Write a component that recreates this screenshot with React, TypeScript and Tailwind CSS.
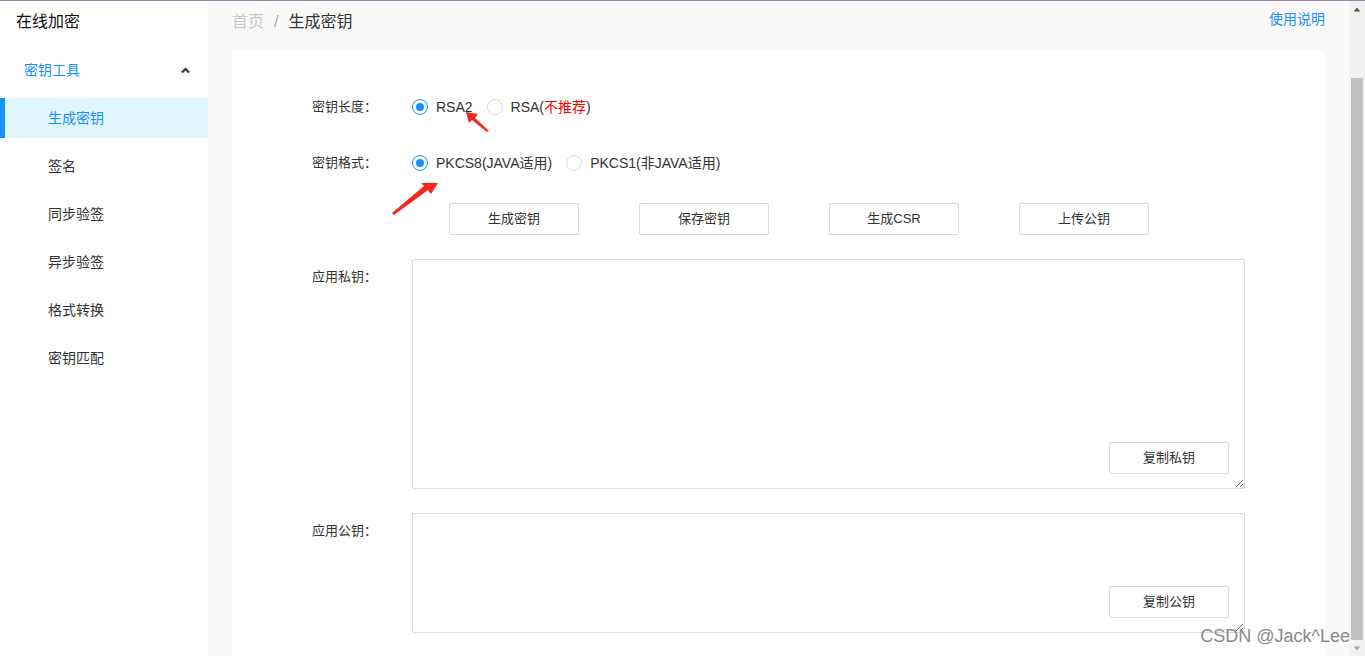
import React from "react";

// ── 定数 ────────────────────────────────────────────────────────────────────

const FONT = {
  fontFamily:
    '"Liberation Sans", "Noto Sans CJK SC", "Noto Sans", sans-serif',
};

const MENU_ITEMS = ["生成密钥", "签名", "同步验签", "异步验签", "格式转换", "密钥匹配"];

const ACTIONS = ["生成密钥", "保存密钥", "生成CSR", "上传公钥"];

// ── ラジオ ────────────────────────────────────────────────────────────────────

function Radio({ checked, children }: { checked?: boolean; children: React.ReactNode }) {
  return (
    <label className="mr-[6px] flex cursor-pointer items-center">
      <span
        className={`flex h-4 w-4 items-center justify-center rounded-full border bg-white ${
          checked ? "border-[#1890ff]" : "border-[#d9d9d9]"
        }`}
      >
        {checked && <span className="h-2 w-2 rounded-full bg-[#1890ff]" />}
      </span>
      <span className="px-2 text-[14px] text-[#333]">{children}</span>
    </label>
  );
}

function Btn({ children, className = "" }: { children: React.ReactNode; className?: string }) {
  return (
    <button
      type="button"
      className={`h-8 rounded-[2px] border border-[#d9d9d9] bg-white text-[13px] text-[#333] ${className}`}
    >
      {children}
    </button>
  );
}

// ── サイドバー ────────────────────────────────────────────────────────────────

function Sidebar() {
  return (
    <aside className="flex w-[208px] shrink-0 flex-col bg-white">
      <div className="flex h-[44px] items-center pl-4 text-[16px] text-[#111]">在线加密</div>
      <div className="mt-[6px] flex h-10 items-center justify-between pl-6 pr-[17px] text-[14px] text-[#1890ff]">
        <span>密钥工具</span>
        <svg viewBox="0 0 10 10" className="h-[11px] w-[11px]" aria-hidden>
          <path d="M1.8 6.8L5 3.6L8.2 6.8" fill="none" stroke="#333" strokeWidth="2" />
        </svg>
      </div>
      <ul className="mt-2 flex flex-col gap-2">
        {MENU_ITEMS.map((m, i) => (
          <li
            key={m}
            className={`relative flex h-10 items-center pl-12 text-[14px] ${
              i === 0 ? "bg-[#e0f6fd] text-[#1890ff]" : "text-[#333]"
            }`}
          >
            {i === 0 && <span className="absolute left-0 top-0 h-full w-[5px] bg-[#1890ff]" />}
            {m}
          </li>
        ))}
      </ul>
    </aside>
  );
}

// ── ページ本体 ────────────────────────────────────────────────────────────────

export default function App() {
  return (
    <div className="relative flex h-[656px] w-[1365px] overflow-hidden bg-[#f9f9f9]" style={FONT}>
      {/* 上端のライン */}
      <div className="absolute left-0 top-0 h-px w-full bg-[#9a86a8]" />

      <Sidebar />

      <main className="flex flex-1 flex-col px-6">
        <div className="flex h-[51px] items-center justify-between pb-[7px]">
          <div className="flex items-center text-[16px]">
            <span className="text-[#c8c8c8]">首页</span>
            <span className="mx-[10px] text-[#aaa]">/</span>
            <span className="text-[#333]">生成密钥</span>
          </div>
          <a className="-mt-[1px] self-start pt-[10px] text-[14px] text-[#1890ff]">使用说明</a>
        </div>

        <div className="flex-1 bg-white pl-20 pt-10">
          {/* 密钥长度 */}
          <div className="flex h-8 items-center">
            <span className="w-[100px] text-[13px] text-[#333]">密钥长度：</span>
            <Radio checked>RSA2</Radio>
            <Radio>
              RSA(<span className="text-[#ff0000]">不推荐</span>)
            </Radio>
          </div>

          {/* 密钥格式 */}
          <div className="mt-6 flex h-8 items-center">
            <span className="w-[100px] text-[13px] text-[#333]">密钥格式：</span>
            <Radio checked>PKCS8(JAVA适用)</Radio>
            <Radio>PKCS1(非JAVA适用)</Radio>
          </div>

          {/* ボタン */}
          <div className="mt-6 flex gap-[60px] pl-[137px]">
            {ACTIONS.map((a) => (
              <Btn key={a} className="w-[130px]">
                {a}
              </Btn>
            ))}
          </div>

          {/* 応用私钥 */}
          <div className="mt-6 flex">
            <span className="w-[100px] pt-[8px] text-[13px] text-[#333]">应用私钥：</span>
            <div className="relative">
              <textarea className="block h-[230px] w-[833px] rounded-[2px] border border-[#d9d9d9] outline-none" />
              <Btn className="absolute bottom-[15px] right-[16px] w-[120px]">复制私钥</Btn>
            </div>
          </div>

          {/* 応用公钥 */}
          <div className="mt-6 flex">
            <span className="w-[100px] pt-[8px] text-[13px] text-[#333]">应用公钥：</span>
            <div className="relative">
              <textarea className="block h-[120px] w-[833px] rounded-[2px] border border-[#d9d9d9] outline-none" />
              <Btn className="absolute bottom-[15px] right-[16px] w-[120px]">复制公钥</Btn>
            </div>
          </div>
        </div>
      </main>

      {/* スクロールバー */}
      <div className="flex w-4 shrink-0 flex-col items-center bg-[#f1f1f1]">
        <svg viewBox="0 0 10 10" className="mt-[6px] h-2 w-2" aria-hidden>
          <path d="M1 7L5 2L9 7Z" fill="#505050" />
        </svg>
        <div className="mt-[64px] h-[562px] w-3 bg-[#c1c1c1]" />
        <svg viewBox="0 0 10 10" className="mt-[4px] h-2 w-2" aria-hidden>
          <path d="M1 3L5 8L9 3Z" fill="#a3a3a3" />
        </svg>
      </div>

      {/* 注釈の矢印 */}
      <svg className="pointer-events-none absolute left-0 top-0" width="1365" height="656" aria-hidden>
        <path d="M466 112 L478 114 L475 118 L489 131 L487 132 L472 120 L469 123 Z" fill="#f5261b" />
        <path d="M438 183 L431 194 L428 190 L394 215 L392 213 L424 186 L421 183 Z" fill="#f5261b" />
      </svg>

      {/* 透かし */}
      <div className="absolute bottom-[6px] right-[15px] text-[18px] text-[#8a8a8a]">
        CSDN @Jack^Lee
      </div>
    </div>
  );
}
